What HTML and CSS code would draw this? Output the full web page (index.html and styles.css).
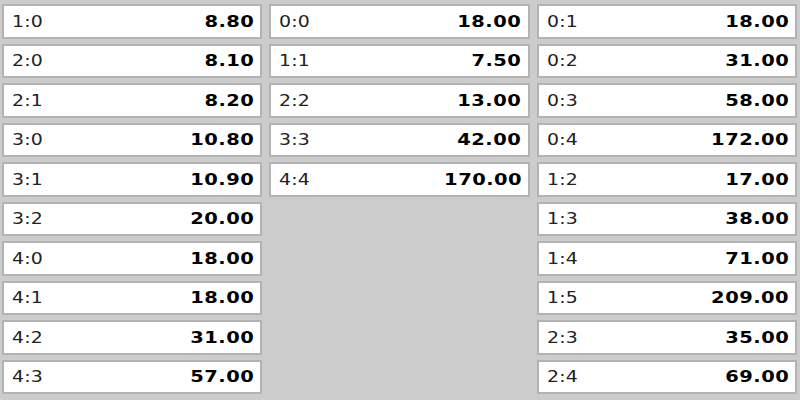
FILE: index.html
```html
<!DOCTYPE HTML>
<html>
<head>
	<title>Correct score</title>
	<meta name="viewport" content="width=device-width">
	<link rel="stylesheet" href="styles.css">
</head>
<body>
	<div class="board">
		<div class="col">
			<div class="cell"><span class="score">1:0</span><span class="odds">8.80</span></div>
			<div class="cell"><span class="score">2:0</span><span class="odds">8.10</span></div>
			<div class="cell"><span class="score">2:1</span><span class="odds">8.20</span></div>
			<div class="cell"><span class="score">3:0</span><span class="odds">10.80</span></div>
			<div class="cell"><span class="score">3:1</span><span class="odds">10.90</span></div>
			<div class="cell"><span class="score">3:2</span><span class="odds">20.00</span></div>
			<div class="cell"><span class="score">4:0</span><span class="odds">18.00</span></div>
			<div class="cell"><span class="score">4:1</span><span class="odds">18.00</span></div>
			<div class="cell"><span class="score">4:2</span><span class="odds">31.00</span></div>
			<div class="cell"><span class="score">4:3</span><span class="odds">57.00</span></div>
		</div>
		<div class="col">
			<div class="cell"><span class="score">0:0</span><span class="odds">18.00</span></div>
			<div class="cell"><span class="score">1:1</span><span class="odds">7.50</span></div>
			<div class="cell"><span class="score">2:2</span><span class="odds">13.00</span></div>
			<div class="cell"><span class="score">3:3</span><span class="odds">42.00</span></div>
			<div class="cell"><span class="score">4:4</span><span class="odds">170.00</span></div>
		</div>
		<div class="col">
			<div class="cell"><span class="score">0:1</span><span class="odds">18.00</span></div>
			<div class="cell"><span class="score">0:2</span><span class="odds">31.00</span></div>
			<div class="cell"><span class="score">0:3</span><span class="odds">58.00</span></div>
			<div class="cell"><span class="score">0:4</span><span class="odds">172.00</span></div>
			<div class="cell"><span class="score">1:2</span><span class="odds">17.00</span></div>
			<div class="cell"><span class="score">1:3</span><span class="odds">38.00</span></div>
			<div class="cell"><span class="score">1:4</span><span class="odds">71.00</span></div>
			<div class="cell"><span class="score">1:5</span><span class="odds">209.00</span></div>
			<div class="cell"><span class="score">2:3</span><span class="odds">35.00</span></div>
			<div class="cell"><span class="score">2:4</span><span class="odds">69.00</span></div>
		</div>
	</div>
</body>
</html>
```

FILE: styles.css
```css
/* font choice */
* {
	font-family: "DejaVu Sans", Verdana, sans-serif;
	box-sizing: border-box;
}
body {
	margin: 0;
	background-color: #cccccc;
}
/* three columns of scores */
.board {
	display: flex;
	gap: 7px;
	padding: 4px 3px 0 2px;
}
.col {
	flex: 1;
	display: flex;
	flex-direction: column;
	gap: 5px;
}
.cell {
	height: 34.5px;
	display: flex;
	align-items: center;
	justify-content: space-between;
	background-color: white;
	border: 2px solid #b3b3b3;
	padding: 0 6px 0 8px;
}
/* the reference text is drawn wide, so stretch it a bit */
.score {
	font-size: 16px;
	letter-spacing: 0.2px;
	color: #222222;
	transform: scaleX(1.18);
	transform-origin: left center;
}
.odds {
	font-size: 16.5px;
	font-weight: bold;
	letter-spacing: 0.4px;
	color: black;
	transform: scaleX(1.18);
	transform-origin: right center;
}
```
